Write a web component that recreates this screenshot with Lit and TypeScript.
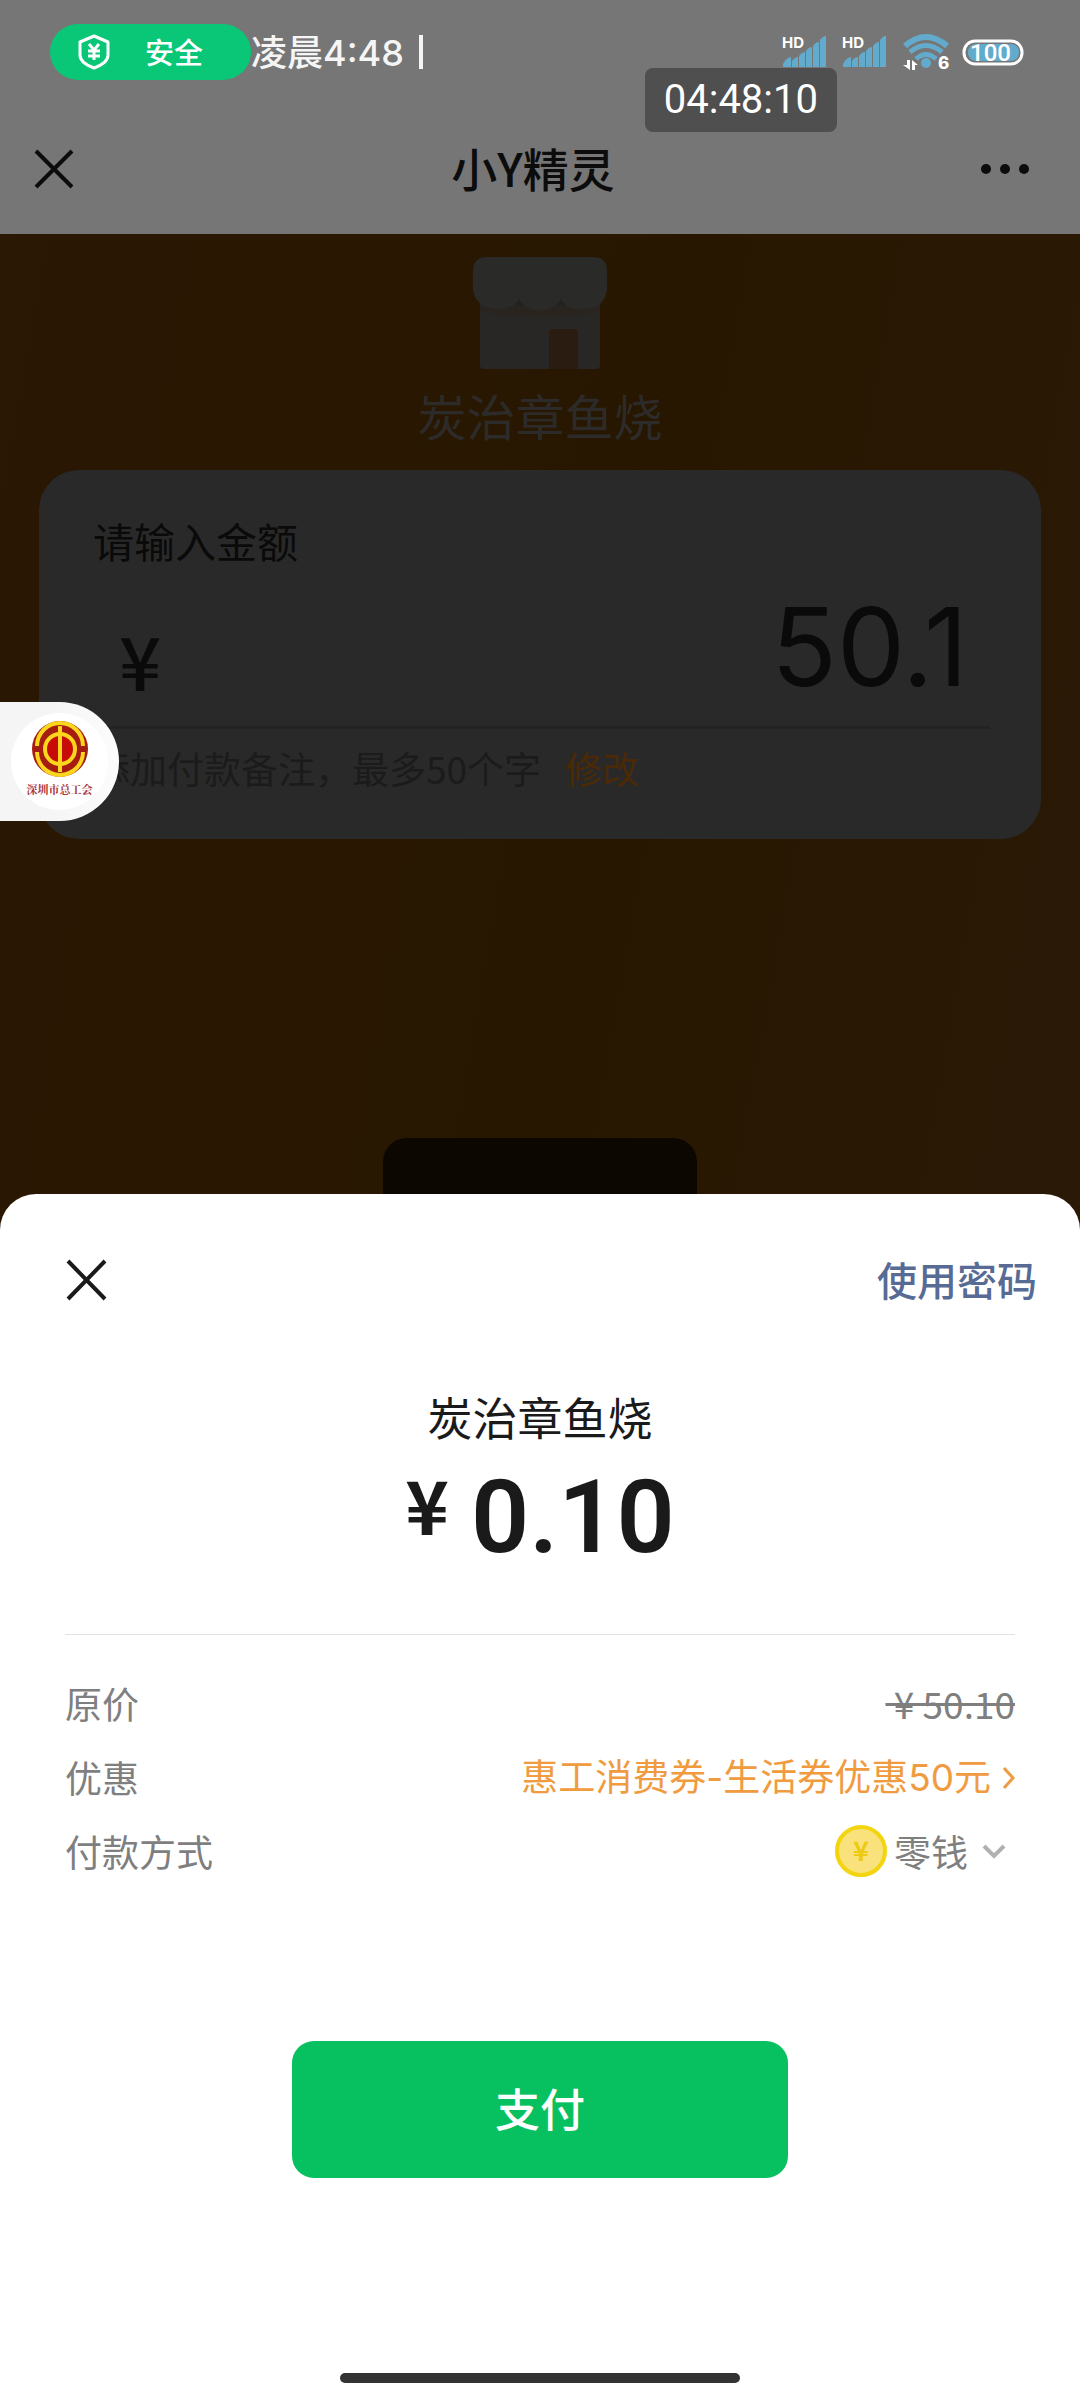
import { LitElement, html, css, svg } from "lit";
import { customElement, property, state } from "lit/decorators.js";

const sans = css`Roboto, "Noto Sans CJK SC", sans-serif`;
const cjk = css`"Noto Sans CJK SC", sans-serif`;

@customElement("status-bar")
class StatusBar extends LitElement {
  static styles = css`
    :host {
      display: flex;
      align-items: center;
      justify-content: space-between;
      height: 104px;
      padding: 0 56px 0 50px;
      color: #f5f5f5;
      font-family: ${cjk};
    }
    .left,
    .right,
    .signals,
    .pill {
      display: flex;
      align-items: center;
    }
    .pill {
      height: 56px;
      padding: 0 48px 0 28px;
      gap: 35px;
      border-radius: 28px;
      background: #09c776;
      color: #fff;
      font-size: 29px;
      font-weight: 500;
    }
    .pill span {
      padding-bottom: 2px;
      line-height: 40px;
    }
    .time {
      padding-bottom: 2px;
      font-size: 36px;
      line-height: 48px;
      font-weight: 500;
    }
    .digits {
      font-family: Inter, sans-serif;
    }
    .bar {
      width: 4px;
      height: 34px;
      margin-left: 15px;
      background: #f5f5f5;
    }
    .right {
      gap: 12px;
    }
    .signals {
      gap: 16px;
    }
    svg {
      display: block;
      overflow: visible;
    }
    .hd {
      font: 700 15px Inter, sans-serif;
      fill: #fff;
    }
    .six {
      font: 800 17px Inter, sans-serif;
      fill: #fff;
    }
    .level {
      font: 500 24px Roboto, sans-serif;
      fill: #fff;
    }
  `;

  private signal() {
    const heights = [9, 14, 19, 24, 30];
    return html`<svg width="44" height="38" viewBox="0 -3 44 38" role="img" aria-label="HD 信号">
      <g fill="#63abcc">
        <path d="M1 31v-3q3-6 8-7v10z" />
        ${heights.map((h, i) => svg`<path d="M${10 + i * 7} 31v-${h - 3}q3-4 6-4v${h + 1}z" />`)}
      </g>
      <text class="hd" x="0" y="12">HD</text>
    </svg>`;
  }

  render() {
    return html`
      <div class="left">
        <div class="pill">
          <svg width="32" height="36" viewBox="0 0 32 36" fill="none" stroke="#fff" aria-hidden="true">
            <path d="M16 2L30 8V21Q30 29 16 34Q2 29 2 21V8Z" stroke-width="3" stroke-linejoin="round" />
            <path d="M11 10l5 6 5-6M16 16v10M10 17h12M10 22h12" stroke-width="3" />
          </svg>
          <span>安全</span>
        </div>
        <span class="time">凌晨<span class="digits">4:48</span></span>
        <span class="bar"></span>
      </div>
      <div class="right">
        <div class="signals">
          ${this.signal()} ${this.signal()}
          <svg width="48" height="38" viewBox="0 0 48 38" role="img" aria-label="Wi-Fi 6">
            <g fill="none" stroke="#63abcc" stroke-width="5">
              <path d="M3 13Q24-5 45 13" stroke-width="6" />
              <path d="M8 19Q24 6 40 19" />
              <path d="M14 26Q24 17 34 26" />
            </g>
            <circle cx="24" cy="30" r="5" fill="#63abcc" />
            <path d="M5 27H8V37L1 32H5ZM10 37V27L16 32H13V37Z" fill="#fff" />
            <text class="six" x="36" y="36">6</text>
          </svg>
        </div>
        <svg width="62" height="28" viewBox="0 0 62 28" role="img" aria-label="电量 100">
          <rect x="2" y="3" width="58" height="23" rx="11" fill="none" stroke="#fff" stroke-width="3" />
          <rect x="6" y="6" width="51" height="17" rx="8" fill="#63abcc" />
          <text class="level" x="8" y="23">100</text>
        </svg>
      </div>
    `;
  }
}

@customElement("merchant-page")
class MerchantPage extends LitElement {
  @property() merchant = "";
  @property() amount = "";

  static styles = css`
    :host {
      display: flex;
      flex-direction: column;
      background: linear-gradient(100deg, #2a1704 0%, #281700 50%, #2a1a09 100%);
      font-family: ${cjk};
    }
    .top {
      background: #767676;
    }
    .nav {
      display: grid;
      grid-template-columns: 1fr auto 1fr;
      align-items: center;
      height: 130px;
      padding: 0 48px 0 34px;
      color: #0c0c0c;
    }
    h1 {
      margin: 0;
      padding-bottom: 4px;
      font-size: 46px;
      font-weight: 500;
      line-height: 60px;
    }
    button {
      padding: 0;
      border: 0;
      background: none;
      font: inherit;
      color: inherit;
    }
    svg {
      display: block;
    }
    .more {
      justify-self: end;
    }
    .shop {
      display: flex;
      flex-direction: column;
      align-items: center;
      padding-top: 23px;
    }
    .name {
      margin: 10px 0 19px;
      color: #2d2b29;
      font-size: 49px;
      line-height: 72px;
    }
    .card {
      margin: 0 39px;
      padding: 42px 51px 44px 54px;
      border-radius: 40px;
      background: #292929;
      color: #0a0a0a;
    }
    .label {
      display: block;
      font-size: 41px;
      line-height: 56px;
    }
    .field {
      display: flex;
      align-items: center;
      height: 158px;
      padding: 0 22px 0 26px;
      border-bottom: 3px solid #232323;
    }
    .yen {
      padding-top: 24px;
      font-size: 74px;
      line-height: 80px;
      font-weight: 500;
    }
    input {
      flex: 1;
      min-width: 0;
      padding: 0;
      border: 0;
      outline: 0;
      background: none;
      color: inherit;
      text-align: right;
      font-family: Inter, sans-serif;
      font-size: 108px;
      line-height: 120px;
      height: 120px;
    }
    .note {
      display: flex;
      gap: 24px;
      padding-top: 12px;
      color: #1b1b1b;
      font-size: 37px;
      line-height: 54px;
    }
    .edit {
      color: #4b2906;
    }
    .submit {
      align-self: center;
      width: 29%;
      height: 120px;
      margin-top: 299px;
      border-radius: 24px;
      background: #0c0701;
    }
  `;

  render() {
    return html`
      <div class="top">
        <status-bar></status-bar>
        <div class="nav">
          <button aria-label="关闭">
            <svg width="40" height="40" viewBox="0 0 40 40" stroke="#0c0c0c" stroke-width="4">
              <path d="M2 2L38 38M38 2L2 38" />
            </svg>
          </button>
          <h1>小Y精灵</h1>
          <button class="more" aria-label="更多">
            <svg width="52" height="12" viewBox="0 0 52 12" fill="#0c0c0c">
              <circle cx="6" cy="6" r="5" /><circle cx="25" cy="6" r="5" /><circle cx="44" cy="6" r="5" />
            </svg>
          </button>
        </div>
      </div>
      <div class="shop">
        <svg width="134" height="112" viewBox="0 0 134 112" aria-hidden="true">
          <path d="M7 46H127V108Q127 112 123 112H11Q7 112 7 108Z" fill="#282726" />
          <path d="M7 50H127V54Q67 66 7 54Z" fill="#2a241f" />
          <path d="M12 0H122Q134 1 134 14V32Q132 51 112 52Q95 53 88 43Q80 53 67 53Q53 53 46 43Q38 53 22 52Q2 50 0 32V14Q0 1 12 0Z" fill="#2a2a29" />
          <path d="M40 49L46 43L52 49ZM82 49L88 43L94 49Z" fill="#242220" />
          <path d="M76 112V76Q76 72 80 72H101Q105 72 105 76V112Z" fill="#2a1c10" />
        </svg>
        <div class="name">${this.merchant}</div>
      </div>
      <div class="card">
        <label class="label" for="amount">请输入金额</label>
        <div class="field">
          <span class="yen">¥</span>
          <input id="amount" inputmode="decimal" .value=${this.amount} />
        </div>
        <div class="note">
          <span>添加付款备注，最多50个字</span>
          <button class="edit">修改</button>
        </div>
      </div>
      <button class="submit" aria-label="付款"></button>
    `;
  }
}

@customElement("union-badge")
class UnionBadge extends LitElement {
  static styles = css`
    :host {
      display: block;
    }
    .tab {
      display: flex;
      align-items: center;
      justify-content: flex-end;
      box-sizing: border-box;
      width: 119px;
      height: 119px;
      padding: 0 11px 0 0;
      border: 0;
      border-radius: 0 60px 60px 0;
      background: linear-gradient(90deg, #f5f5f6 40%, #fcfcfc);
    }
    .disc {
      display: flex;
      flex-direction: column;
      align-items: center;
      justify-content: center;
      box-sizing: border-box;
      width: 97px;
      height: 97px;
      padding-bottom: 6px;
      border-radius: 50%;
      background: #fff;
      color: #a8343a;
      font-family: "Noto Serif CJK SC", ${cjk};
      font-size: 11px;
      font-weight: 700;
      line-height: 16px;
    }
    svg {
      display: block;
      margin-bottom: 3px;
    }
  `;

  render() {
    return html`
      <button class="tab">
        <span class="disc">
          <svg width="58" height="58" viewBox="0 0 58 58" fill="none" aria-hidden="true">
            <circle cx="29" cy="29" r="28" fill="#a51d10" />
            <g stroke="#fbd61c" stroke-width="4">
              <path d="M6 26A23 23 0 0 1 52 26M6 32A23 23 0 0 0 52 32" />
              <circle cx="29" cy="29" r="15" fill="#c60b08" />
              <path d="M29 6V52" />
            </g>
          </svg>
          深圳市总工会
        </span>
      </button>
    `;
  }
}

@customElement("pay-sheet")
class PaySheet extends LitElement {
  @property() merchant = "";
  @state() private method = "零钱";

  static styles = css`
    :host {
      display: flex;
      flex-direction: column;
      padding: 56px 65px 17px;
      border-radius: 36px 36px 0 0;
      background: #fff;
      color: #1a1a1a;
      font-family: ${cjk};
    }
    button {
      padding: 0;
      border: 0;
      background: none;
      font: inherit;
      color: inherit;
    }
    svg {
      display: block;
    }
    header {
      display: flex;
      align-items: center;
      justify-content: space-between;
      height: 60px;
      margin-right: -22px;
    }
    .password {
      padding-bottom: 2px;
      color: #576b95;
      font-size: 40px;
      font-weight: 500;
      line-height: 60px;
    }
    h2 {
      margin: 77px 0 0;
      text-align: center;
      font-size: 45px;
      font-weight: 400;
      line-height: 60px;
    }
    .total {
      display: flex;
      justify-content: center;
      gap: 22px;
      margin-top: 20px;
      padding-bottom: 67px;
      border-bottom: 1px solid #e2e2e2;
      font-family: ${sans};
      font-weight: 600;
    }
    .sign {
      font-family: ${cjk};
      font-size: 74px;
      font-weight: 700;
      line-height: 72px;
    }
    .sum {
      font-size: 102px;
      line-height: 100px;
    }
    dl {
      margin: 31px 0 0;
      color: #7f7f7f;
      font-size: 37px;
      line-height: 74px;
    }
    .row {
      display: flex;
      justify-content: space-between;
    }
    dd {
      margin: 0;
    }
    .coupon,
    .method {
      display: flex;
      align-items: center;
    }
    .coupon {
      gap: 11px;
      padding-top: 1px;
      color: #f09b3f;
      font-family: Inter, ${cjk};
      line-height: 73px;
    }
    .method {
      gap: 7px;
      padding-right: 9px;
    }
    select {
      appearance: none;
      margin: 0;
      padding: 0 7px 0 0;
      border: 0;
      background: none;
      color: inherit;
      font: inherit;
    }
    .pay {
      align-self: center;
      width: 46vw;
      height: 137px;
      margin-top: 153px;
      padding-bottom: 4px;
      border-radius: 22px;
      background: #07c160;
      color: #fff;
      font-size: 45px;
      font-weight: 500;
    }
    .home {
      align-self: center;
      width: 37vw;
      height: 10px;
      margin-top: 195px;
      border-radius: 5px;
      background: #333;
    }
    .coin {
      font: 700 27px ${cjk};
      fill: #edcb12;
      text-anchor: middle;
    }
  `;

  private pick(e: Event) {
    this.method = (e.target as HTMLSelectElement).value;
  }

  render() {
    return html`
      <header>
        <button aria-label="关闭">
          <svg width="42" height="42" viewBox="0 0 42 42" stroke="#1a1a1a" stroke-width="4">
            <path d="M3 2L40 40M40 2L3 40" />
          </svg>
        </button>
        <button class="password">使用密码</button>
      </header>
      <h2>${this.merchant}</h2>
      <div class="total"><span class="sign">¥</span><span class="sum">0.10</span></div>
      <dl>
        <div class="row">
          <dt>原价</dt>
          <dd><s>&nbsp;¥&nbsp;50.10</s></dd>
        </div>
        <div class="row">
          <dt>优惠</dt>
          <dd>
            <button class="coupon">
              惠工消费券-生活券优惠50元
              <svg width="13" height="22" viewBox="0 0 13 22" fill="none" stroke="#f09b3f" stroke-width="3">
                <path d="M2 1L11 11L2 21" />
              </svg>
            </button>
          </dd>
        </div>
        <div class="row">
          <dt><label for="method">付款方式</label></dt>
          <dd class="method">
            <svg width="52" height="52" viewBox="0 0 52 52" aria-hidden="true">
              <circle cx="26" cy="26" r="24" fill="#f9e27c" stroke="#f2d50f" stroke-width="4" />
              <text class="coin" x="26" y="36">¥</text>
            </svg>
            <select id="method" .value=${this.method} @change=${this.pick}>
              <option>零钱</option>
            </select>
            <svg width="24" height="15" viewBox="0 0 24 15" fill="none" stroke="#b0b0b0" stroke-width="4">
              <path d="M2 2L12 12L22 2" />
            </svg>
          </dd>
        </div>
      </dl>
      <button class="pay">支付</button>
      <div class="home"></div>
    `;
  }
}

@customElement("app-root")
class AppRoot extends LitElement {
  static styles = css`
    :host {
      display: grid;
      min-height: 100vh;
      position: relative;
    }
    merchant-page,
    pay-sheet {
      grid-area: 1 / 1;
      min-width: 0;
    }
    pay-sheet {
      align-self: end;
      z-index: 1;
    }
    .clock {
      position: absolute;
      top: 68px;
      right: 243px;
      padding: 0 19px;
      border-radius: 8px;
      background: #4f4f4f;
      color: #fff;
      font-family: ${sans};
      font-size: 40px;
      line-height: 64px;
    }
    union-badge {
      position: absolute;
      top: 702px;
      left: 0;
    }
  `;

  render() {
    return html`
      <merchant-page merchant="炭治章鱼烧" amount="50.1"></merchant-page>
      <div class="clock">04:48:10</div>
      <union-badge></union-badge>
      <pay-sheet merchant="炭治章鱼烧"></pay-sheet>
    `;
  }
}
